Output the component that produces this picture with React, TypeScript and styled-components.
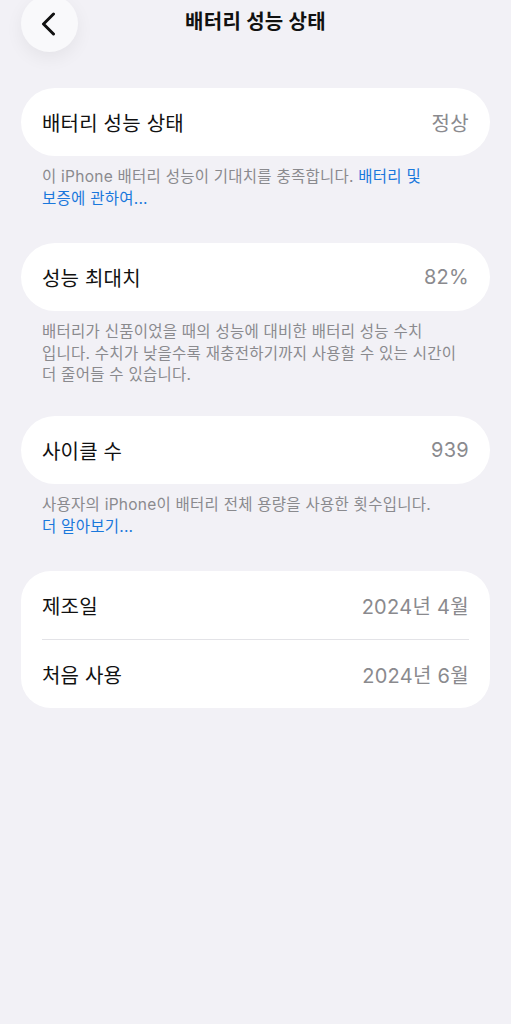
import styled, { createGlobalStyle } from "styled-components";

const GlobalStyle = createGlobalStyle`
  html, body {
    margin: 0;
    padding: 0;
    background: #f2f1f6;
  }
  body {
    font-family: Inter, "Noto Sans CJK KR", sans-serif;
    -webkit-font-smoothing: antialiased;
  }
`;

const Screen = styled.div`
  width: 511px;
  min-height: 1024px;
  background: #f2f1f6;
  display: flex;
  flex-direction: column;
  padding: 0 21px;
  box-sizing: border-box;
`;

const Header = styled.header`
  height: 88px;
  display: grid;
  grid-template-columns: 60px 1fr 60px;
  align-items: start;
`;

const BackButton = styled.button`
  width: 57px;
  height: 57px;
  margin-top: -5px;
  border-radius: 50%;
  border: none;
  background: #f9f9fb;
  box-shadow: 0 6px 18px rgba(0, 0, 0, 0.06);
  display: flex;
  align-items: center;
  justify-content: center;
  padding: 0 3px 0 0;
  cursor: pointer;
`;

const Title = styled.h1`
  margin: 0;
  padding-top: 8px;
  text-align: center;
  font-size: 20px;
  line-height: 28px;
  font-weight: 700;
  letter-spacing: 0.3px;
  color: #111;
`;

const Card = styled.div<{ $multi?: boolean }>`
  background: #fff;
  border-radius: ${(p) => (p.$multi ? "30px" : "34px")};
  padding: 0 21px;
  display: flex;
  flex-direction: column;
`;

const Row = styled.div`
  height: 68px;
  display: flex;
  align-items: center;
  justify-content: space-between;
  & + & {
    border-top: 1px solid #e3e3e7;
  }
`;

const Label = styled.span`
  font-size: 20px;
  letter-spacing: 0.2px;
  color: #111;
`;

const Value = styled.span`
  font-size: 20px;
  letter-spacing: 0.3px;
  color: #8a8a8e;
`;

const Footnote = styled.p<{ $bottom?: number }>`
  margin: 0;
  padding: 10px 10px ${(p) => p.$bottom ?? 34}px 21px;
  font-size: 15.5px;
  line-height: 21.5px;
  letter-spacing: 0.25px;
  color: #8a8a8e;
  white-space: nowrap;
`;

const Link = styled.a`
  color: #1a78dc;
  text-decoration: none;
`;

function Chevron() {
  return (
    <svg width="15" height="24" viewBox="0 0 15 24" fill="none">
      <path
        d="M12.5 2L2.5 12L12.5 22"
        stroke="#111"
        strokeWidth="3"
        strokeLinecap="round"
        strokeLinejoin="round"
      />
    </svg>
  );
}

export default function App() {
  return (
    <>
      <GlobalStyle />
      <Screen>
        <Header>
          <BackButton aria-label="뒤로">
            <Chevron />
          </BackButton>
          <Title>배터리 성능 상태</Title>
          <div />
        </Header>

        <Card>
          <Row>
            <Label>배터리 성능 상태</Label>
            <Value>정상</Value>
          </Row>
        </Card>
        <Footnote>
          이 iPhone 배터리 성능이 기대치를 충족합니다. <Link>배터리 및</Link>
          <br />
          <Link>보증에 관하여...</Link>
        </Footnote>

        <Card>
          <Row>
            <Label>성능 최대치</Label>
            <Value>82%</Value>
          </Row>
        </Card>
        <Footnote $bottom={30.5}>
          배터리가 신품이었을 때의 성능에 대비한 배터리 성능 수치
          <br />
          입니다. 수치가 낮을수록 재충전하기까지 사용할 수 있는 시간이
          <br />
          더 줄어들 수 있습니다.
        </Footnote>

        <Card>
          <Row>
            <Label>사이클 수</Label>
            <Value>939</Value>
          </Row>
        </Card>
        <Footnote>
          사용자의 iPhone이 배터리 전체 용량을 사용한 횟수입니다.
          <br />
          <Link>더 알아보기...</Link>
        </Footnote>

        <Card $multi>
          <Row>
            <Label>제조일</Label>
            <Value>2024년 4월</Value>
          </Row>
          <Row>
            <Label>처음 사용</Label>
            <Value>2024년 6월</Value>
          </Row>
        </Card>
      </Screen>
    </>
  );
}
